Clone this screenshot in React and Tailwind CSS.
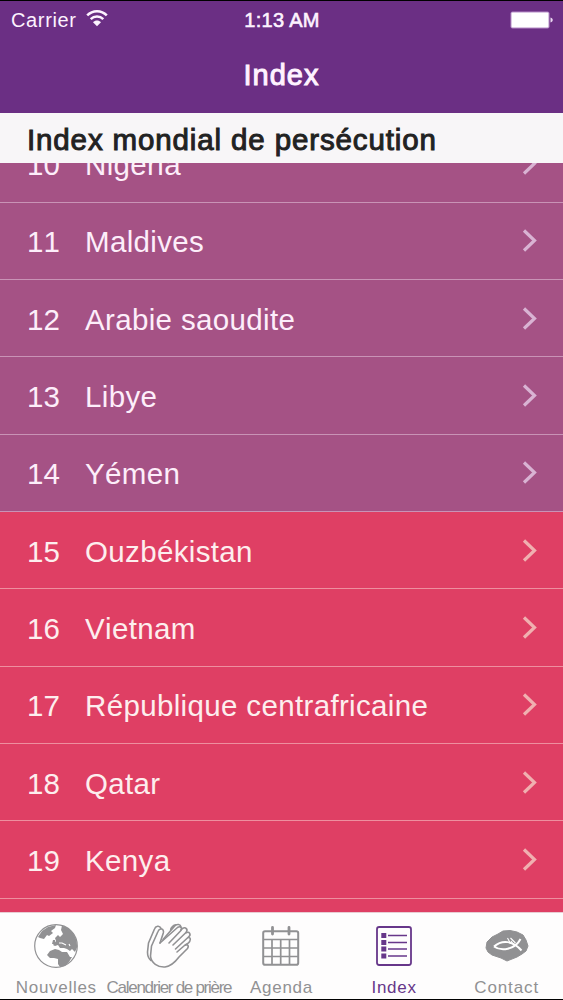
const countries = [
  { rank: 10, name: "Nigeria", level: "high" },
  { rank: 11, name: "Maldives", level: "high" },
  { rank: 12, name: "Arabie saoudite", level: "high" },
  { rank: 13, name: "Libye", level: "high" },
  { rank: 14, name: "Yémen", level: "high" },
  { rank: 15, name: "Ouzbékistan", level: "extreme" },
  { rank: 16, name: "Vietnam", level: "extreme" },
  { rank: 17, name: "République centrafricaine", level: "extreme" },
  { rank: 18, name: "Qatar", level: "extreme" },
  { rank: 19, name: "Kenya", level: "extreme" },
];

const rowStyles = {
  high: "bg-[#a55285] border-[#c993b6] text-[#fdeefa]",
  extreme: "bg-[#df3f64] border-[#ee8f9f] text-[#fdeeee]",
};

const chevronStyles = {
  high: "text-[#d9b3d3]",
  extreme: "text-[#f0b0b0]",
};

function StatusBar() {
  return (
    <div className="flex h-[38px] items-center text-[20px] text-[#fdf3ff]">
      <div className="flex flex-1 items-center pl-[11px]">
        <span className="tracking-[0.65px]">Carrier</span>
        <svg className="ml-[9px] h-[18px] w-[22px] -translate-y-[2px]" viewBox="0 0 22 18" fill="none">
          <path d="M1.2 6.4C6.6 0.8 15.4 0.8 20.8 6.4" stroke="currentColor" strokeWidth="2.5" />
          <path d="M4.7 10.2C8.2 6.7 13.8 6.7 17.3 10.2" stroke="currentColor" strokeWidth="2.5" />
          <path d="M11 17.3L7 13.3C9.2 11 12.8 11 15 13.3Z" fill="currentColor" />
        </svg>
      </div>
      <span className="tracking-[0.3px] [-webkit-text-stroke:0.6px]">1:13 AM</span>
      <div className="flex flex-1 justify-end pr-[10px]">
        <svg className="h-[18px] w-[43px]" viewBox="0 0 43 18">
          <rect x="0.5" y="0.5" width="39" height="17" rx="2" fill="#b58bc6" />
          <rect x="1.5" y="1.5" width="37" height="15" rx="1" fill="#fff" />
          <path d="M40.5 6.5C43.5 7.5 43.5 10.5 40.5 11.5Z" fill="#e9d5f0" />
        </svg>
      </div>
    </div>
  );
}

function Row({ rank, name, level }) {
  return (
    <li className={`flex h-[77.33px] shrink-0 items-center border-b text-[29.5px] [font-kerning:none] ${rowStyles[level]}`}>
      <span className="w-[85px] pt-[2px] pl-[27px]">{rank}</span>
      <span className="flex-1 pt-[2px] tracking-[0.35px]">{name}</span>
      <svg className={`mr-[26px] h-[23px] w-[15px] ${chevronStyles[level]}`} viewBox="0 0 15 23" fill="none">
        <path d="M2 1.5L12.5 11.5L2 21.5" stroke="currentColor" strokeWidth="3.2" />
      </svg>
    </li>
  );
}

function GlobeIcon() {
  return (
    <svg className="h-[46px] w-[46px]" viewBox="0 0 46 46">
      <circle cx="23" cy="23" r="21.3" fill="#fff" stroke="#919193" strokeWidth="1.2" />
      <g fill="#919193">
        <path d="M5 14L9 8L15 4L23 2L22 5L18 8L20 10L16 13L14 12L11 16L7 15Z" />
        <path d="M29 2.5L34 4.5L40 9.5L43.5 17L44.2 24L42 29L39 26L37 28L34 26L31 25L27 25L25 22L22 23L20 22L23 18L22 15L25 12L27 14L30 11L28 7Z" />
        <path d="M17 28L22 26L26 27L29 29L34 29L37 34L39 34L36 39L32 43L27 44L25 41L25 36L21 35L17 35L14 32Z" />
        <path d="M20 17L22 17L22 21L19 21ZM16 8L18 7L18 10Z" />
      </g>
      <path d="M26 20L29 20L33 22M36 21L37 23" stroke="#fff" strokeWidth="1.1" fill="none" />
    </svg>
  );
}

function HandsIcon() {
  return (
    <svg className="h-[46px] w-[46px]" viewBox="0 0 46 46" fill="none" stroke="#919193" strokeWidth="1.6" strokeLinejoin="round" strokeLinecap="round">
      <path d="M14 20L17.3 10C18.5 5.5 13.5 4.5 12 8.5L5.5 23L4.5 33C5 40 12 44.5 19 44C26 43 30 38 33 34L41.5 25.5C43.5 22.5 41 20.5 38.5 22.5L31 29" />
      <path d="M14 20L31.5 4.5C34.5 2.5 37 5.5 34.5 8L23 20" />
      <path d="M34.8 7L36.5 5.5C39.5 3.5 42.5 6.5 40 9.5L27 22" />
      <path d="M40 9.8C43.5 8 45.5 11.5 42.5 14L29.5 26" />
      <path d="M42.3 14.5C45.3 14.5 44.5 18 42.5 19.8L39.5 22" />
      <path d="M15 5.3C13.5 2 9.5 3 8.5 6L2.5 20L1.5 29C1.5 33 3 36 5 37.5" />
      <path d="M17 16.5L28.5 3.2C31 0.5 34.5 1.2 35 4M24.5 7.8L25 5.5C27 2 29.5 1.5 30.5 2" />
    </svg>
  );
}

function CalendarIcon() {
  return (
    <svg className="h-[46px] w-[46px]" viewBox="0 0 46 46" fill="none" stroke="#919193">
      <rect x="5.2" y="8.2" width="35" height="33.5" rx="1.8" strokeWidth="2" />
      <path d="M5 16.5H40M5 25H40M5 33.5H40M14 16.5V41M22.7 16.5V41M31.5 16.5V41" strokeWidth="1.7" />
      <path d="M14.5 4.5V11M31 4.5V11" strokeWidth="2.8" strokeLinecap="round" />
    </svg>
  );
}

function ListIcon() {
  return (
    <svg className="h-[46px] w-[46px]" viewBox="0 0 46 46" fill="none" stroke="#67378a">
      <rect x="6" y="4" width="34" height="38" rx="2.2" strokeWidth="1.8" />
      <path d="M17 12.5H36M17 19.5H36M17 26H36M17 33H36" strokeWidth="1.7" />
      <path d="M10.3 12.5H15.3M10.3 19.5H15.3M10.3 26H15.3M10.3 33H15.3" strokeWidth="4.8" />
    </svg>
  );
}

function FishIcon() {
  return (
    <svg className="h-[46px] w-[46px]" viewBox="0 0 46 46" fill="none">
      <path
        d="M2 25L3 19L8 14L14 11L19 8L26 7.5L33 9L39 12L42 17L44 23L42 28L38 31L33 34L28 36L23 38L17 35L8 32L4 29Z"
        fill="#919193"
        stroke="#919193"
        strokeLinejoin="round"
      />
      <path d="M10 23.5C17 28.5 31 27 36.5 16M10 23.5C18 16.5 29 17.5 37.5 27.5" stroke="#fff" strokeWidth="2" />
      <path d="M23.5 15L26.5 20.5M27 18L29.5 21.5M26.5 15L31.5 20" stroke="#fff" strokeWidth="1.1" />
    </svg>
  );
}

const tabs = [
  { label: "Nouvelles", icon: GlobeIcon, className: "text-[#919193] tracking-[0.7px]" },
  { label: "Calendrier de prière", icon: HandsIcon, className: "text-[#919193] tracking-[-1.28px]" },
  { label: "Agenda", icon: CalendarIcon, className: "text-[#919193] tracking-[0.7px]" },
  { label: "Index", icon: ListIcon, className: "text-[#67378a] tracking-[0.7px]" },
  { label: "Contact", icon: FishIcon, className: "text-[#919193] tracking-[0.9px]" },
];

export default function App() {
  return (
    <div className="flex h-[1000px] w-[563px] flex-col overflow-hidden border-y border-black bg-white font-['Liberation_Sans',sans-serif] leading-none">
      {/* Header */}
      <header className="h-[112px] shrink-0 bg-[#6b2f84]">
        <StatusBar />
        <h1 className="pt-[22px] text-center text-[29px] text-[#fff3ff] tracking-[1px] [-webkit-text-stroke:1px]">
          Index
        </h1>
      </header>

      <h2 className="flex h-[50px] shrink-0 items-center bg-[#f8f6f8] pt-[3px] pl-[27px] text-[29.5px] text-[#222] tracking-[0.87px] [-webkit-text-stroke:1px]">
        Index mondial de persécution
      </h2>

      {/* Country list, scrolled part way */}
      <div className="min-h-0 flex-1 overflow-hidden bg-[#df3f64]">
        <ul className="-mt-[37.5px] flex flex-col">
          {countries.map((country) => (
            <Row key={country.rank} {...country} />
          ))}
        </ul>
      </div>

      {/* Tab bar */}
      <nav className="grid h-[87px] shrink-0 grid-cols-5 border-t border-[#e9cdd3] bg-[#fefdfd]">
        {tabs.map(({ label, icon: Icon, className }) => (
          <div key={label} className={`flex flex-col items-center pt-[10px] text-[17px] whitespace-nowrap ${className}`}>
            <Icon />
            <span className="mt-[10px]">{label}</span>
          </div>
        ))}
      </nav>
    </div>
  );
}
